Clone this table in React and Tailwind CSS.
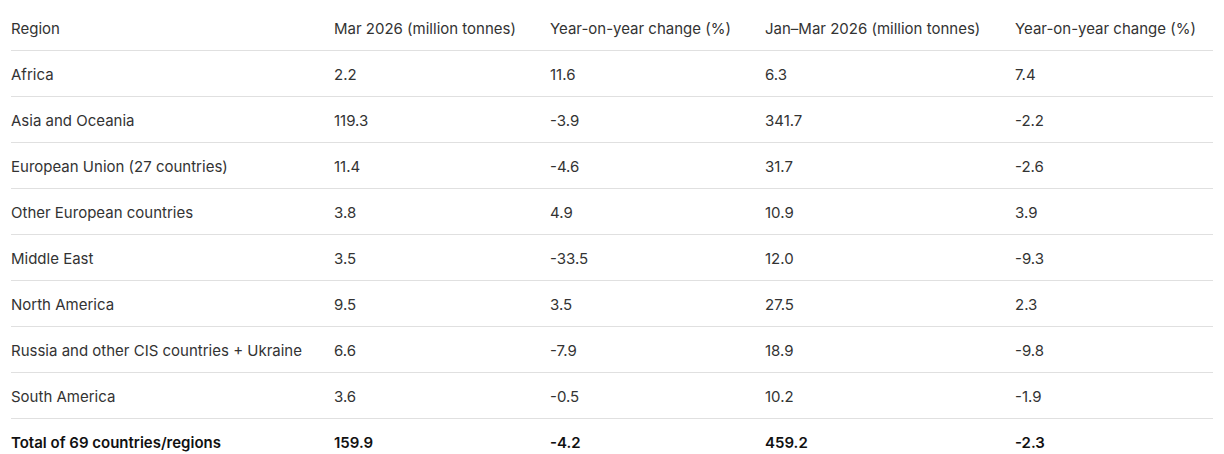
const header = ["Region", "Mar 2026 (million tonnes)", "Year-on-year change (%)", "Jan–Mar 2026 (million tonnes)", "Year-on-year change (%)"];
const rows = [
  ["Africa", "2.2", "11.6", "6.3", "7.4"],
  ["Asia and Oceania", "119.3", "-3.9", "341.7", "-2.2"],
  ["European Union (27 countries)", "11.4", "-4.6", "31.7", "-2.6"],
  ["Other European countries", "3.8", "4.9", "10.9", "3.9"],
  ["Middle East", "3.5", "-33.5", "12.0", "-9.3"],
  ["North America", "9.5", "3.5", "27.5", "2.3"],
  ["Russia and other CIS countries + Ukraine", "6.6", "-7.9", "18.9", "-9.8"],
  ["South America", "3.6", "-0.5", "10.2", "-1.9"],
];
const total = ["Total of 69 countries/regions", "159.9", "-4.2", "459.2", "-2.3"];

export default function App() {
  return (
    <div className="bg-white w-[1224px] h-[454px] overflow-hidden px-[11px] pt-[5px]" style={{ fontFamily: "Inter, 'Noto Sans', sans-serif" }}>
      <table className="w-[1202px] border-collapse table-fixed text-[15px] leading-[21px] text-[#333333]">
        <colgroup>
          <col className="w-[323px]" />
          <col className="w-[216px]" />
          <col className="w-[215px]" />
          <col className="w-[250px]" />
          <col className="w-[198px]" />
        </colgroup>
        <thead>
          <tr className="border-b border-[#e0e0e0]">
            {header.map((h, i) => (
              <th key={i} className="text-left font-normal pt-[13px] pb-[11px] pr-2 whitespace-nowrap">{h}</th>
            ))}
          </tr>
        </thead>
        <tbody>
          {rows.map((r, ri) => (
            <tr key={ri} className="border-b border-[#e0e0e0]">
              {r.map((c, ci) => (
                <td key={ci} className="pt-[13px] pb-[11px] pr-2 whitespace-nowrap">{c}</td>
              ))}
            </tr>
          ))}
          <tr>
            {total.map((c, ci) => (
              <td key={ci} className="pt-[13px] pb-[11px] pr-2 font-semibold text-[#111111] whitespace-nowrap">{c}</td>
            ))}
          </tr>
        </tbody>
      </table>
    </div>
  );
}
